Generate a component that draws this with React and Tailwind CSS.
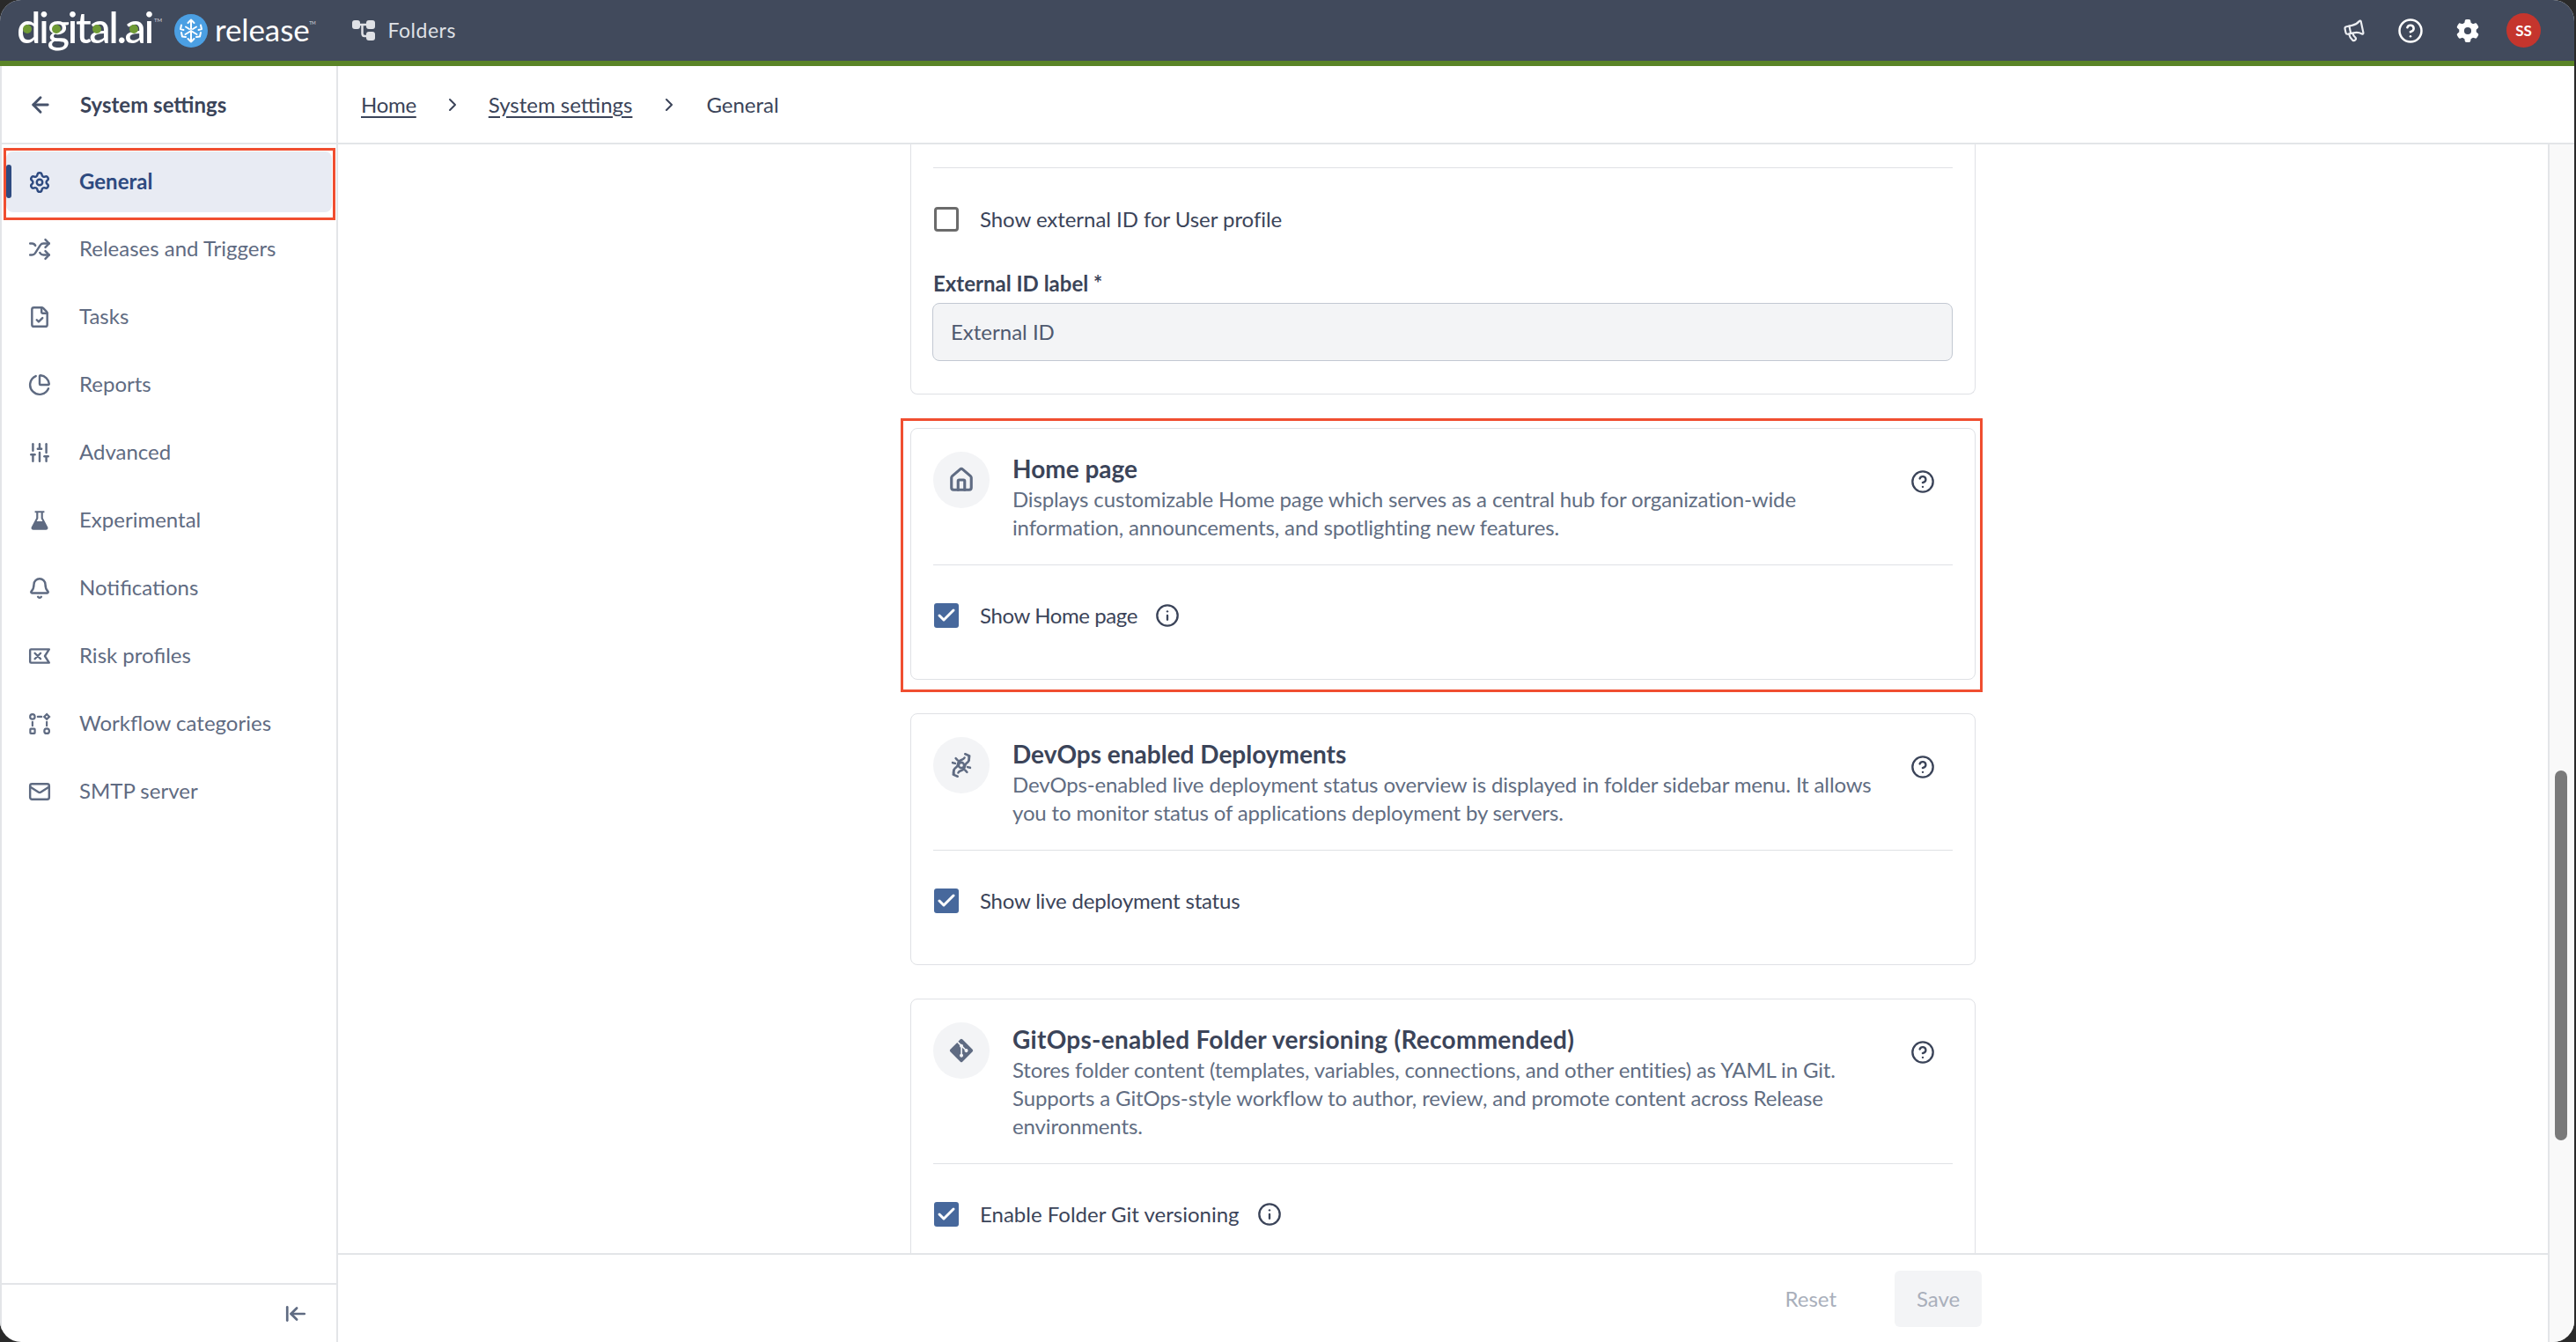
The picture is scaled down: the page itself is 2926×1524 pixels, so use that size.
import React from "react";
import {
  ArrowLeft,
  ArrowLeftToLine,
  Bell,
  ChartPie,
  Check,
  ChevronRight,
  CircleHelp,
  FileCheck,
  House,
  Info,
  Mail,
  Megaphone,
  Settings,
  Shuffle,
  SlidersVertical,
} from "lucide-react";
import { FaGitAlt } from "react-icons/fa";
import { FaGear } from "react-icons/fa6";

const FlaskIcon = ({ size = 26, className }) => (
  <svg width={size} height={size} viewBox="0 0 24 24" className={className}>
    <path d="M7 2h10v2h-1.500v5.500l5 9.500c.8 1.600-.2 3-2 3H5.500c-1.800 0-2.800-1.400-2-3l5-9.500V4H7z" fill="currentColor" />
    <path d="M10.500 4h3v6l1.600 3H8.900l1.600-3z" fill="#fff" />
  </svg>
);

const RiskIcon = ({ size = 26, className }) => (
  <svg width={size} height={size} viewBox="0 0 24 24" fill="none" stroke="currentColor" strokeWidth="2.200" strokeLinejoin="round" strokeLinecap="round" className={className}>
    <path d="M3 5h19l-4.500 7 4.500 7H3a1 1 0 0 1-1-1V6a1 1 0 0 1 1-1z" />
    <path d="M7 9l6 6M13 9l-6 6" />
  </svg>
);

const WorkflowIcon = ({ size = 26, className }) => (
  <svg width={size} height={size} viewBox="0 0 24 24" fill="none" stroke="currentColor" strokeWidth="2" strokeLinecap="round" className={className}>
    <circle cx="4.500" cy="4.500" r="2.500" />
    <path d="M19.500 1.800l2.700 2.700-2.700 2.700-2.700-2.700z" />
    <rect x="2.200" y="17.200" width="4.800" height="4.800" rx="0.600" />
    <circle cx="19.500" cy="19.500" r="2.600" />
    <path d="M10 4.500h4M4.500 10v4M19.500 10v4" />
  </svg>
);

const DeployIcon = ({ size = 34, className }) => (
  <svg width={size} height={size} viewBox="0 0 24 24" fill="none" stroke="currentColor" strokeWidth="1.800" strokeLinecap="round" strokeLinejoin="round" className={className}>
    <circle cx="12" cy="12" r="2.200" />
    <path d="M6 19c-1-3 .5-4.500 2-5.500s.8-3 2-4.500 3.500-1 4.500-3" />
    <path d="M18 5c1 3-.5 4.500-2 5.500s-.8 3-2 4.500-3.500 1-4.500 3" />
    <path d="M15 3l3.500 1.500L18 8M9 21l-3.500-1.500L6 16" />
    <path d="M7.500 6.500l1.500 1.500M15 16l1.500 1.500M5 10l2 .5M17 13.500l2 .5" />
  </svg>
);

const ReleaseLogo = () => (
  <svg width="38" height="38" viewBox="0 0 38 38" className="shrink-0">
    <circle cx="19" cy="19" r="19" fill="#4b9fe3" />
    <g fill="none" stroke="#fff" strokeWidth="2" strokeLinecap="round" strokeLinejoin="round">
      <path d="M19 6.500v10.500M15.500 10l3.500-3.500 3.500 3.500" />
      <path d="M19 31.500V21M15.500 28l3.500 3.500 3.500-3.500" />
      <path d="M19 19l-6.500 4M19 19l6.500 4M13 14.500l4 2.500M25 14.500l-4 2.500" />
      <path d="M8 12.500l-1 4.500 3.500 1M30 12.500l1 4.500-3.500 1" />
      <path d="M8 21l1 4.500 4 .5M30 21l-1 4.500-4 .5" />
    </g>
  </svg>
);

const FoldersIcon = () => (
  <svg width="26" height="24" viewBox="0 0 26 24" className="shrink-0">
    <g fill="#dfe1e6">
      <rect x="0" y="0" width="9" height="10" rx="3" />
      <rect x="16" y="0" width="10" height="10" rx="3" />
      <rect x="16" y="13" width="10" height="10" rx="3" />
    </g>
    <path d="M8 5h9M11.500 5v10c0 2 1 3 2.500 3h3" fill="none" stroke="#dfe1e6" strokeWidth="2.500" />
  </svg>
);

const navItems = [
  { label: "General", icon: Settings, active: true },
  { label: "Releases and Triggers", icon: Shuffle },
  { label: "Tasks", icon: FileCheck },
  { label: "Reports", icon: ChartPie },
  { label: "Advanced", icon: SlidersVertical },
  { label: "Experimental", icon: FlaskIcon },
  { label: "Notifications", icon: Bell },
  { label: "Risk profiles", icon: RiskIcon },
  { label: "Workflow categories", icon: WorkflowIcon },
  { label: "SMTP server", icon: Mail },
];

const Highlight = ({ className }) => (
  <div className={`absolute border-[3px] border-[#f04e30] pointer-events-none ${className}`} />
);

const Header = () => (
  <header className="h-[75px] shrink-0 bg-[#414a5c] border-b-[6px] border-[#5a8427] flex items-center pl-[19px] pr-[38px]">
    <div className="relative w-[171px] shrink-0 h-[69px] flex items-center">
      <span className="text-white text-[49px] leading-none font-medium tracking-[-2.5px] -mt-[9px]">digital.ai</span>
      <span className="absolute left-[7px] top-[28px] size-[10px] rounded-full bg-[#6f9b35]" />
      <span className="absolute left-[40px] top-[28px] size-[10px] rounded-full bg-[#6f9b35]" />
      <span className="absolute left-[86px] top-[28px] size-[10px] rounded-full bg-[#6f9b35]" />
      <span className="absolute left-[128px] top-[28px] size-[10px] rounded-full bg-[#6f9b35]" />
      <span className="absolute left-[156px] top-[20px] text-[6px] leading-none text-[#d5d8de]">TM</span>
    </div>
    <div className="ml-[8px] flex items-center gap-[8px]">
      <ReleaseLogo />
      <span className="relative text-white text-[35px] leading-none tracking-[-0.1px] -mt-[2px]">
        release
        <span className="absolute -right-[7px] top-[8px] text-[5px] leading-none text-[#d5d8de]">TM</span>
      </span>
    </div>
    <div className="ml-[48px] flex items-center gap-[15px]">
      <FoldersIcon />
      <span className="text-[#dfe1e6] text-[23px] tracking-[0.5px]">Folders</span>
    </div>
    <div className="ml-auto flex items-center">
      <Megaphone size={26} strokeWidth={2} className="text-[#eceef2] -rotate-12" />
      <CircleHelp size={30} strokeWidth={2} className="text-white ml-[36px]" />
      <FaGear size={26} className="text-white ml-[37px]" />
      <div className="ml-[31px] size-[39px] rounded-full bg-[#c5352d] text-white flex items-center justify-center text-[17px] font-bold">SS</div>
    </div>
  </header>
);

const Sidebar = () => (
  <aside className="w-[384px] shrink-0 flex flex-col border-l-2 border-r-2 border-[#e3e5e8]">
    <div className="h-[89px] shrink-0 border-b-2 border-[#e3e5e8] flex items-center pl-[30px] gap-[31px] text-[#3b4459]">
      <ArrowLeft size={28} strokeWidth={2.5} className="text-[#46526a]" />
      <span className="text-[24px] font-bold">System settings</span>
    </div>
    <nav className="flex flex-col gap-[8px] pt-[8px] pl-[5px] pr-[5px] flex-1">
      {navItems.map(({ label, icon: Icon, active }) => (
        <div
          key={label}
          className={`relative h-[69px] rounded-[8px] flex items-center pl-[25px] gap-[32px] text-[24px] ${
            active ? "bg-[#e8ebf3] text-[#2e4a80] font-bold -mb-[1px]" : "text-[#5f6b82]"
          }`}
        >
          {active && <span className="absolute left-0 top-[15px] w-[6px] h-[38px] rounded-[3px] bg-[#2e4a80]" />}
          {active && <Highlight className="-left-[3px] -right-[4px] -top-[4px] -bottom-[9px]" />}
          <Icon size={26} strokeWidth={2.25} className="shrink-0" />
          <span className="-mt-[2px]">{label}</span>
        </div>
      ))}
    </nav>
    <div className="h-[67px] shrink-0 border-t-2 border-[#e3e5e8] flex items-center justify-end pr-[33px] text-[#5f6b82]">
      <ArrowLeftToLine size={26} strokeWidth={2.5} />
    </div>
  </aside>
);

const Breadcrumb = () => (
  <div className="h-[89px] shrink-0 border-b-2 border-[#e3e5e8] flex items-center pl-[26px] text-[24px] text-[#3b4459]">
    <a className="underline underline-offset-[4px] tracking-[-0.3px]">Home</a>
    <ChevronRight size={24} strokeWidth={2} className="mx-[29px]" />
    <a className="underline underline-offset-[4px]">System settings</a>
    <ChevronRight size={24} strokeWidth={2} className="mx-[30px]" />
    <span>General</span>
  </div>
);

const Checkbox = ({ checked }) =>
  checked ? (
    <span className="size-[28px] rounded-[3px] bg-[#47689c] flex items-center justify-center shrink-0">
      <Check size={24} strokeWidth={3} className="text-white" />
    </span>
  ) : (
    <span className="size-[28px] rounded-[4px] border-[3px] border-[#6b6b6b] shrink-0" />
  );

const CheckRow = ({ checked, label, info, labelClass = "" }) => (
  <div className="flex items-center pl-[1px] h-[28px] text-[24px] text-[#3b4459]">
    <Checkbox checked={checked} />
    <span className={`ml-[24px] ${labelClass}`}>{label}</span>
    {info && <Info size={28} strokeWidth={2} className="ml-[20px] text-[#3b4459]" />}
  </div>
);

const SettingCard = ({ icon, title, titleClass = "", lines, children, className = "" }) => (
  <section className={`relative w-[1210px] shrink-0 rounded-[8px] border border-[#dfe1e5] bg-white px-[25px] pt-[26px] ${className}`}>
    <div className="flex pb-[26px] border-b border-[#dfe1e5]">
      <div className="size-[64px] rounded-full bg-[#f3f4f6] flex items-center justify-center text-[#5f6b82] shrink-0">{icon}</div>
      <div className="ml-[26px] w-[990px]">
        <h3 className={`text-[28px] leading-[38px] font-bold text-[#3b4459] ${titleClass}`}>{title}</h3>
        <p className="text-[24px] leading-[32px] text-[#616d82] tracking-[-0.14px]">{lines}</p>
      </div>
      <CircleHelp size={28} strokeWidth={2} className="ml-[30px] mt-[20px] text-[#3b4459] shrink-0" />
    </div>
    <div className="pt-[43px]">{children}</div>
  </section>
);

export default function App() {
  return (
    <div className="w-[2926px] h-[1524px] bg-[#2a2a2a] overflow-hidden font-['Lato',sans-serif]">
      <div className="w-[2924px] h-full rounded-[24px] overflow-hidden bg-white flex flex-col">
        <Header />
        <div className="flex flex-1 min-h-0">
          <Sidebar />
          <main className="flex-1 min-w-0 flex flex-col">
            <Breadcrumb />
            <div className="flex flex-1 min-h-0">
              <div className="flex-1 min-w-0 flex flex-col">
                <div className="flex-1 min-h-0 overflow-hidden flex flex-col items-center">
                  <section className="w-[1210px] shrink-0 rounded-b-[8px] border-x border-b border-[#dfe1e5] px-[25px] pt-[26px] pb-[37px] mb-[38px]">
                    <div className="border-t border-[#dfe1e5] pt-[44px]">
                      <CheckRow label="Show external ID for User profile" labelClass="tracking-[-0.05px]" />
                      <label className="block mt-[43px] text-[24px] leading-[32px] font-bold text-[#3b4459]">External ID label *</label>
                      <div className="mt-[6px] -ml-[1px] h-[66px] rounded-[8px] border border-[#c2c8d2] bg-[#f3f4f6] flex items-center pl-[20px] text-[24px] text-[#4f5a70]">External ID</div>
                    </div>
                  </section>
                  <SettingCard
                    className="mb-[38px]"
                    icon={<House size={30} strokeWidth={2.5} />}
                    title="Home page"
                    lines="Displays customizable Home page which serves as a central hub for organization-wide information, announcements, and spotlighting new features."
                  >
                    <div className="pb-[58px]">
                      <CheckRow checked label="Show Home page" labelClass="tracking-[-0.4px]" info />
                    </div>
                    <Highlight className="-left-[12px] -right-[9px] -top-[12px] -bottom-[15px]" />
                  </SettingCard>
                  <SettingCard
                    className="mb-[38px]"
                    icon={<DeployIcon />}
                    title="DevOps enabled Deployments"
                    lines="DevOps-enabled live deployment status overview is displayed in folder sidebar menu. It allows you to monitor status of applications deployment by servers."
                  >
                    <div className="pb-[58px]">
                      <CheckRow checked label="Show live deployment status" labelClass="tracking-[-0.2px]" />
                    </div>
                  </SettingCard>
                  <SettingCard
                    icon={<FaGitAlt size={30} />}
                    title="GitOps-enabled Folder versioning (Recommended)"
                    titleClass="tracking-[0.28px]"
                    lines="Stores folder content (templates, variables, connections, and other entities) as YAML in Git. Supports a GitOps-style workflow to author, review, and promote content across Release environments."
                  >
                    <div className="pb-[58px]">
                      <CheckRow checked label="Enable Folder Git versioning" info />
                    </div>
                  </SettingCard>
                </div>
                <footer className="h-[101px] shrink-0 border-t-2 border-[#e3e5e8] flex items-center justify-center">
                  <div className="w-[1224px] flex items-center justify-end text-[24px] text-[#a9afbb]">
                    <span className="mr-[66px]">Reset</span>
                    <span className="w-[99px] h-[64px] rounded-[6px] bg-[#f3f4f6] flex items-center justify-center">Save</span>
                  </div>
                </footer>
              </div>
              <div className="relative w-[30px] shrink-0 bg-[#f9f9f9] border-l-2 border-[#e3e5e8]">
                <div className="absolute left-[6px] top-[711px] w-[14px] h-[420px] rounded-[7px] bg-[#7a7a7a]" />
              </div>
            </div>
          </main>
        </div>
      </div>
    </div>
  );
}
